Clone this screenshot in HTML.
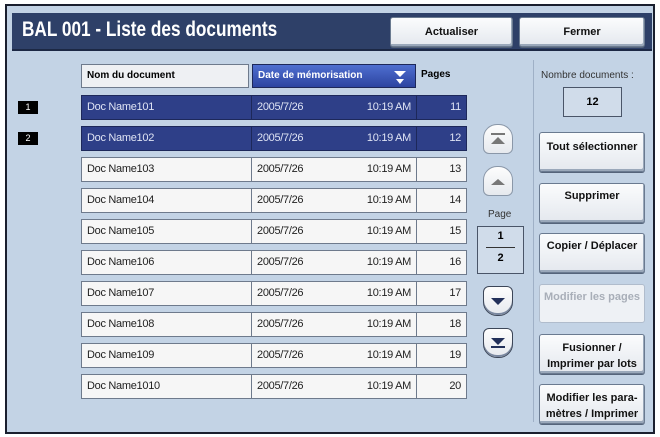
<!DOCTYPE html><html><head><style>
body{margin:0;width:660px;height:437px;background:#fff;position:relative;overflow:hidden;font-family:"Liberation Sans",sans-serif}
.a{position:absolute}
.frame{left:5px;top:4px;width:646px;height:426px;background:#c3d3e5;border:2px solid #1a1f2e}
.title{left:12px;top:13px;width:640px;height:36px;background:#2e4068;border-bottom:2px solid #1c2844}
.title span{position:absolute;left:10px;top:5px;color:#fff;font-size:21px;font-weight:bold;transform:scaleX(.82);transform-origin:left}
.btn{background:linear-gradient(#fbfcfd,#e4e8ee);border:1px solid #6a7a90;box-shadow:inset -1px -2px 0 #9aa8ba,0 1px 0 #55647a;border-radius:3px;font-size:11px;font-weight:bold;color:#111;text-align:center;box-sizing:border-box}
.cell{position:absolute;height:25px;box-sizing:border-box;background:#f6f6f6;border:1px solid #6e7a8c;font-size:11px;line-height:23px;color:#222;padding:0 5px;letter-spacing:-.3px}
.sel .cell{background:#2e3f88;color:#dfe4f4;border-color:#1d285a}
.idx{position:absolute;left:18px;width:20px;height:13px;background:#000;color:#fff;font-size:9px;text-align:center;line-height:13px}
.nav{position:absolute;left:483px;width:30px;height:30px;background:linear-gradient(#fdfdfd,#e6e9ee);border:1px solid #8a97a8;box-sizing:border-box}
</style></head><body>
<div class="a frame"></div>
<div class="a title"><span>BAL 001 - Liste des documents</span></div>
<div class="a btn" style="left:390px;top:17px;width:123px;height:30px;line-height:28px">Actualiser</div>
<div class="a btn" style="left:519px;top:17px;width:126px;height:30px;line-height:28px">Fermer</div>
<div class="a" style="left:81px;top:64px;width:168px;height:24px;background:#eef0f3;border:1px solid #6e7a8c;box-sizing:border-box;font-size:10px;font-weight:bold;line-height:22px;padding-left:5px">Nom du document</div>
<div class="a" style="left:252px;top:64px;width:164px;height:24px;background:linear-gradient(#4f6fd0,#2c44a0);border:1px solid #1d285a;box-sizing:border-box;font-size:10px;font-weight:bold;color:#fff;line-height:22px;padding-left:5px">Date de mémorisation
<svg style="position:absolute;right:8px;top:5px" width="14" height="14"><path d="M1 1h12l-6 6z" fill="#fff"/><path d="M3 9h8l-4 5z" fill="#fff"/></svg></div>
<div class="a" style="left:421px;top:69px;font-size:10px;font-weight:bold">Pages</div>
<div class="a" style="left:533px;top:60px;width:1px;height:362px;background:#9fb0c6"></div>
<div class="a" style="left:541px;top:70px;font-size:10px;color:#333">Nombre documents :</div>
<div class="a" style="left:563px;top:87px;width:59px;height:30px;border:1px solid #4a5568;box-sizing:border-box;background:#d0dcea;text-align:center;line-height:28px;font-size:11px;font-weight:bold">12</div>
<div id="rows"></div>
<div class="idx" style="top:101px">1</div><div class="idx" style="top:132px">2</div>
<div class="nav" style="top:124px;border-radius:14px 14px 6px 6px"><svg width="28" height="28"><rect x="7" y="8" width="14" height="2" fill="#777"/><path d="M7 19h14l-7-7z" fill="#777"/></svg></div>
<div class="nav" style="top:166px;border-radius:14px 14px 6px 6px"><svg width="28" height="28"><path d="M7 18h14l-7-6z" fill="#777"/></svg></div>
<div class="a" style="left:488px;top:209px;font-size:10px;color:#333">Page</div>
<div class="a" style="left:477px;top:226px;width:47px;height:48px;border:1px solid #4a5568;box-sizing:border-box;background:#d0dcea;text-align:center;font-size:11px;font-weight:bold"><div style="margin-top:3px">1</div><div style="width:29px;height:1px;background:#333;margin:5px auto 4px"></div><div>2</div></div>
<div class="nav" style="top:286px;border-radius:6px 6px 14px 14px;border-color:#3c4658;box-shadow:inset 0 -2px 0 #7a88a0"><svg width="28" height="28"><path d="M7 11h14l-7 7z" fill="#22305a"/></svg></div>
<div class="nav" style="top:328px;border-radius:6px 6px 14px 14px;border-color:#3c4658;box-shadow:inset 0 -2px 0 #7a88a0"><svg width="28" height="28"><path d="M7 9h14l-7 7z" fill="#22305a"/><rect x="7" y="17" width="14" height="2" fill="#22305a"/></svg></div>
<div class="a btn" style="left:539px;top:132px;width:106px;height:40px;padding-top:8px">Tout sélectionner</div>
<div class="a btn" style="left:539px;top:183px;width:106px;height:40px;padding-top:6px">Supprimer</div>
<div class="a btn" style="left:539px;top:233px;width:106px;height:40px;padding-top:6px">Copier / Déplacer</div>
<div class="a btn" style="left:539px;top:284px;width:106px;height:39px;padding-top:6px;color:#a8aeb8;box-shadow:none;border-color:#b0bccc;background:#eef1f5">Modifier les pages</div>
<div class="a btn" style="left:539px;top:334px;width:106px;height:40px;padding-top:5px;line-height:16px">Fusionner /<br>Imprimer par lots</div>
<div class="a btn" style="left:539px;top:384px;width:106px;height:40px;padding-top:5px;line-height:16px">Modifier les para-<br>mètres / Imprimer</div>
<script>
var h='';for(var i=0;i<10;i++){var y=95+i*31;h+='<div class="'+(i<2?'sel':'')+'">'+
'<div class="cell" style="left:81px;top:'+y+'px;width:171px">Doc Name10'+(i+1)+'</div>'+
'<div class="cell" style="left:251px;top:'+y+'px;width:166px">2005/7/26<span style="float:right">10:19 AM</span></div>'+
'<div class="cell" style="left:416px;top:'+y+'px;width:51px;text-align:right">'+(11+i)+'</div></div>';}
document.getElementById('rows').innerHTML=h;
</script>
</body></html>
